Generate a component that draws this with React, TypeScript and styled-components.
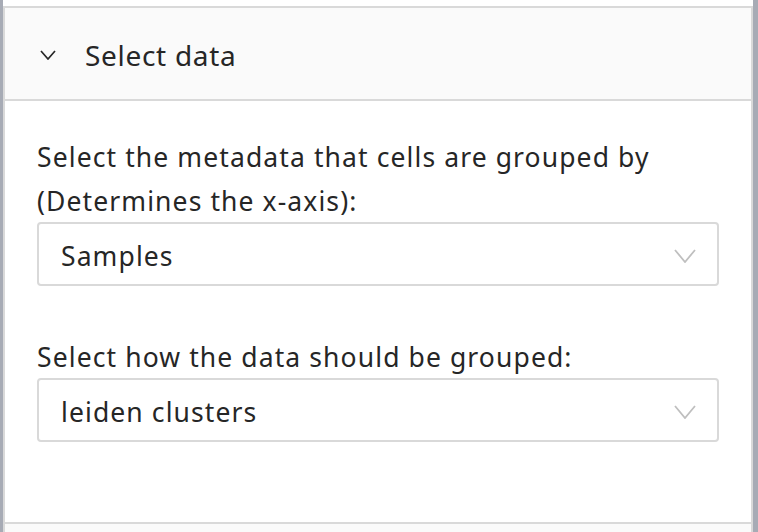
import React from "react";
import styled, { createGlobalStyle } from "styled-components";

const Global = createGlobalStyle`
  html, body { margin: 0; padding: 0; background: #ffffff; }
  body { font-family: "Noto Sans", "Open Sans", sans-serif; }
  * { box-sizing: border-box; }
`;

const Page = styled.div`
  width: 758px;
  height: 532px;
  display: flex;
  overflow: hidden;
  background: #ffffff;
`;

const SideBar = styled.div<{ $w: number }>`
  width: ${(p) => p.$w}px;
  flex: none;
  background: #a7abb5;
`;

const Panel = styled.div`
  flex: 1;
  margin-top: 6px;
  border: 2px solid #d9d9d9;
  border-bottom: none;
  display: flex;
  flex-direction: column;
  min-width: 0;
`;

const Header = styled.div`
  height: 93px;
  flex: none;
  display: flex;
  align-items: center;
  padding: 2px 0 0 35px;
  gap: 29px;
  background: #fafafa;
  border-bottom: 2px solid #d9d9d9;
  color: #262626;
  font-size: 28px;
  letter-spacing: 0.7px;
`;

const Content = styled.div`
  height: 423px;
  flex: none;
  padding: 34px 32px 0 32px;
  background: #ffffff;
  border-bottom: 2px solid #d9d9d9;
`;

const Footer = styled.div`
  flex: 1;
  background: #fafafa;
`;

const Field = styled.div<{ $mt?: number }>`
  margin-top: ${(p) => p.$mt ?? 0}px;
`;

const Label = styled.div`
  font-size: 26.5px;
  line-height: 44px;
  letter-spacing: 1.1px;
  color: #262626;
`;

const SelectBox = styled.div`
  height: 64px;
  margin-top: -1px;
  border: 2px solid #d9d9d9;
  border-radius: 4px;
  display: flex;
  align-items: center;
  justify-content: space-between;
  padding: 3px 21px 0 22px;
  font-size: 26.5px;
  letter-spacing: 1.1px;
  color: #262626;
  background: #ffffff;
`;

const Chevron = ({ color, w, h, sw }: { color: string; w: number; h: number; sw: number }) => (
  <svg width={w} height={h} viewBox={`0 0 ${w} ${h}`} fill="none">
    <polyline
      points={`1,1 ${w / 2},${h - 1} ${w - 1},1`}
      stroke={color}
      strokeWidth={sw}
      strokeLinejoin="miter"
    />
  </svg>
);

export default function App() {
  return (
    <>
      <Global />
      <Page>
        <SideBar $w={3} />
        <Panel>
          <Header>
            <Chevron color="#262626" w={16} h={10} sw={1.7} />
            <span>Select data</span>
          </Header>
          <Content>
            <Field>
              <Label>
                Select the metadata that cells are grouped by
                <br />
                (Determines the x-axis):
              </Label>
              <SelectBox>
                <span>Samples</span>
                <Chevron color="#bfbfbf" w={22} h={14} sw={1.8} />
              </SelectBox>
            </Field>
            <Field $mt={49}>
              <Label>Select how the data should be grouped:</Label>
              <SelectBox>
                <span>leiden clusters</span>
                <Chevron color="#bfbfbf" w={22} h={14} sw={1.8} />
              </SelectBox>
            </Field>
          </Content>
          <Footer />
        </Panel>
        <SideBar $w={5} />
      </Page>
    </>
  );
}
